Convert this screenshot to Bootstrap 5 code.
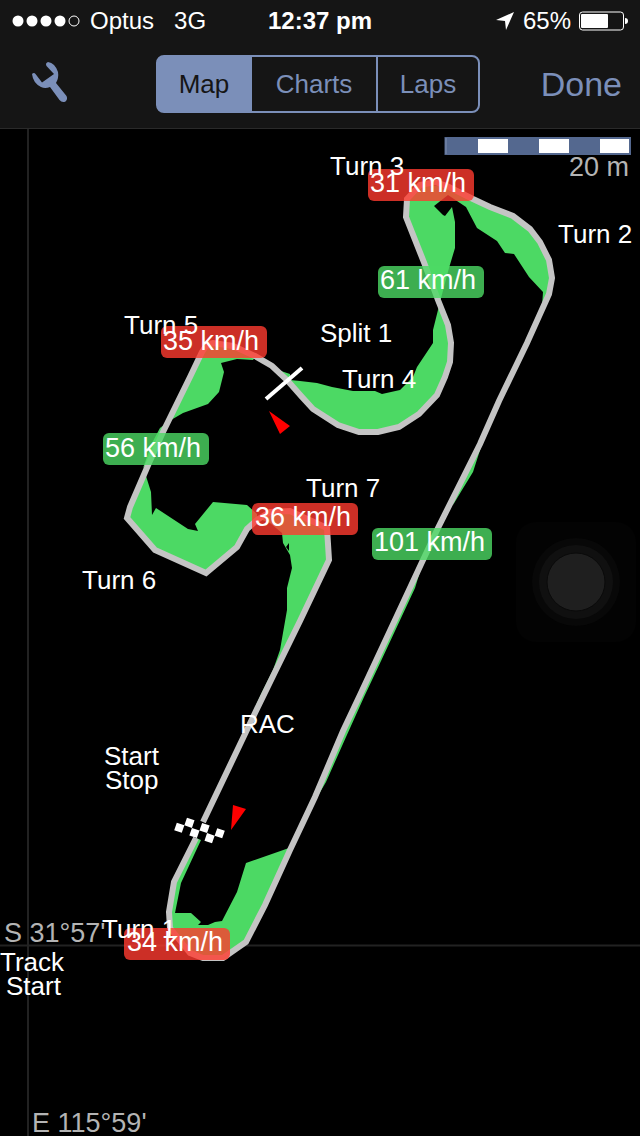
<!DOCTYPE html>
<html lang="en">
<head>
<meta charset="utf-8">
<meta name="viewport" content="width=device-width, initial-scale=1">
<title>Track map</title>
<link href="https://cdn.jsdelivr.net/npm/bootstrap@5.3.0/dist/css/bootstrap.min.css" rel="stylesheet">
<style>
  :root { --tint: #7b8fb9; --panel: #151515; }
  body { background: #000; color: #fff; font-family: "Liberation Sans", Arial, sans-serif; }
  .top-panel { background: var(--panel); border-bottom: 1px solid #2a2a2a; }
  .status-line { height: 42px; padding: 0 12px; font-size: 24px; line-height: 42px; }
  .side { flex: 1 1 0; }
  .tool-line { height: 86px; padding: 0 18px 2px 14px; }
  .segments .btn {
    --bs-btn-color: var(--tint); --bs-btn-border-color: var(--tint); --bs-btn-border-width: 2px;
    --bs-btn-hover-color: var(--tint); --bs-btn-hover-border-color: var(--tint);
    --bs-btn-active-color: var(--panel); --bs-btn-active-bg: var(--tint); --bs-btn-active-border-color: var(--tint);
    --bs-btn-border-radius: 8px; --bs-btn-padding-x: 0; --bs-btn-padding-y: 0;
    height: 58px; font-size: 26px; line-height: 54px;
  }
  .segments.btn-group > .btn:not(:first-child) { margin-left: -2px; }
  .seg-map { width: 96px; } .seg-charts { width: 128px; } .seg-laps { width: 104px; }
  .done-btn { color: var(--tint); font-size: 34px; line-height: 40px; }
  .track-map text { font-size: 26px; fill: #fff; }
  .track-map .axis { fill: #b4b4b4; font-size: 27px; }
  .track-map .speeds text { font-size: 27px; }
  .lap-area { fill: #4cd964; }
  .lap-line { fill: none; stroke: #c4c4c4; stroke-width: 6; stroke-linejoin: miter; }
  .fast { fill: #4cd964; fill-opacity: .8; }
  .slow { fill: #ff3b30; fill-opacity: .8; }
  .assist { right: 4px; top: 393px; width: 120px; height: 120px; border-radius: 20px; background: #030303; }
</style>
</head>
<body>
<header class="top-panel">
  <div class="status-line d-flex align-items-center">
    <div class="side d-flex align-items-center">
      <svg width="70" height="14" viewBox="0 0 70 14" fill="#fff" aria-label="Signal strength">
        <circle cx="6" cy="7" r="5.5"/><circle cx="20" cy="7" r="5.5"/><circle cx="34" cy="7" r="5.5"/><circle cx="48" cy="7" r="5.5"/>
        <circle cx="62" cy="7" r="5" fill="none" stroke="#fff"/>
      </svg>
      <span class="ms-1 ps-1 me-3">Optus</span><span class="ms-1">3G</span>
    </div>
    <span class="fw-bold">12:37 pm</span>
    <div class="side d-flex align-items-center justify-content-end gap-2">
      <svg width="20" height="20" viewBox="0 0 20 20" fill="#fff" aria-label="Location in use"><path d="M19 1 1 9l9 1 1 9z"/></svg>
      <span>65%</span>
      <svg width="49" height="20" viewBox="0 0 49 20" aria-label="Battery">
        <rect x=".5" y="1" width="44" height="18" rx="3" fill="none" stroke="#fff"/>
        <rect x="2" y="3" width="27" height="14" rx="1" fill="#fff"/><path d="M46 7q3 0 3 3t-3 3z" fill="#fff"/>
      </svg>
    </div>
  </div>
  <nav class="tool-line d-flex align-items-center">
    <div class="side">
      <button type="button" class="btn border-0 p-0 ms-3" aria-label="Settings">
        <svg class="d-block" width="40" height="44" viewBox="0 0 40 44" fill="#7b8fb9">
          <path d="M18 0Q25 1 28 10Q29 16 26 21L36.500 34Q38 37 35.500 39.500Q32 41 29.500 38L20 25Q15 27 11 25Q3 21 2 12Q4 10 5.500 12L12 20.500L24 12L16.500 4Q15 1 18 0Z"/>
        </svg>
      </button>
    </div>
    <div class="btn-group segments" role="group" aria-label="View">
      <button type="button" class="btn active seg-map" aria-pressed="true">Map</button>
      <button type="button" class="btn seg-charts">Charts</button>
      <button type="button" class="btn seg-laps">Laps</button>
    </div>
    <div class="side text-end"><button type="button" class="btn border-0 p-0 done-btn">Done</button></div>
  </nav>
</header>
<main class="position-relative">
  <!-- Map canvas; y starts at 129, below the toolbar -->
  <svg class="track-map d-block w-100" viewBox="0 129 640 1007" role="img" aria-label="Lap speed map">
    <path d="M28 129V1136M0 945.500H640" stroke="#222" stroke-width="2"/>
    <g class="lap-area">
      <path d="M406 217 425 265 440 302 449 268 455 248 455 222 452 207 445 216 443 215 434 206 448 195 466 207 477 228 497 241 505 253 514 254 529 277 543 292 542 307 549 295 553 278 549 260 540 242 530 229 513 216 490 207 473 199 447 186 420 185 407 199Z"/>
      <path d="M439 306 433 330 433 343 423 358 417 367 413 377 400 390 382 394 375 391 353 391 332 387 317 383 300 381 290 380 290 374 281 371 287 380 300 396 313 410 338 425 359 432 378 432 399 427 419 414 437 395 445 377 450 362 451 343 448 325Z"/>
      <path d="M255 357 253 360 237 359 221 363 224 372 219 392 208 404 183 413 171 420 190 377 202 352 213 343 233 346Z"/>
      <path d="M164 425 160 428 152 443 143 468 152 458 166 428Z"/>
      <path d="M146 476 151 492 152 515 156 508 188 529 198 531 195 524 213 502 247 505 257 514 257 520 247 529 237 547 206 574 155 550 126 518 130 507Z"/>
      <path fill-rule="evenodd" d="M257 518 270 523 282 533 283 543 290 555 292 568 287 588 287 610 280 650 273 670 262 692 252 714 257 712 276 672 283 660 329 560 327 528 290 511 270 512ZM286 547 289 543 289 551Z"/>
      <path d="M201 840 181 883 175 913 191 913 201 922 198 925 208 925 215 922 222 921 237 892 246 863 289 848 265 907 247 942 223 959 205 959 190 953 169 928 168 912 174 882 196 838Z"/>
      <path d="M482 444 473 472 462 490 453 505 456 490ZM423 562 415 588 381 661 364 697 346 737 326 782 312 806 343 730 373 667Z"/>
    </g>
    <path class="lap-line" d="M203 822 255 713 275 672 300 621 329 560 327 528 290 511 270 512 257 520 247 529 237 547 206 573 155 550 127 518 130 507 149 463 163 432 190 377 202 352Q207 343 213 343L233 346 255 356 272 366 287 380 302 397 313 409 338 425 359 432 378 432 399 427 419 414 437 395 445 377 450 362 451 343 448 325 438 300 425 265 406 217 407 199 420 185 435 182 447 186 473 199 490 207 513 216 530 229 540 242 549 260 552 278 549 294 527 343 499 401 480 444 438 528 423 560 395 620 360 695 343 731 315 797 290 850 265 905 246 942 223 958 203 958 190 953 170 928 169 912 174 882 196 838"/>
    <path d="M266 399 302 368" stroke="#fff" stroke-width="4"/>
    <path d="M269 411 290 426 280 434ZM233 805 246 809 231 830Z" fill="red"/>
    <g fill="#fff" transform="translate(199.500 830.500) rotate(19)">
      <path d="M-24 0h8v8h-8zM-16-8h8v8h-8zM-8 0h8v8h-8zM0-8h8v8h-8zM8 0h8v8h-8zM16-8h8v8h-8z"/>
    </g>

    <g>
      <rect x="444.500" y="137" width="186.500" height="18" fill="#54688f"/>
      <path d="M478 139h30v14h-30zM539 139h30v14h-30zM600 139h29v14h-29z" fill="#fff"/>
      <path d="M446 138v16" stroke="#8090b0"/>
    </g>
    <text class="axis" x="629" y="176" text-anchor="end">20 m</text>
    <text class="axis" x="4" y="942">S 31°57'</text>
    <text class="axis" x="32" y="1132">E 115°59'</text>

    <g class="slow">
      <rect x="368" y="169" width="106" height="32" rx="6"/>
      <rect x="161" y="326" width="106" height="32" rx="6"/>
      <rect x="252" y="503" width="106" height="32" rx="6"/>
      <rect x="124" y="928" width="106" height="32" rx="6"/>
    </g>
    <g class="fast">
      <rect x="378" y="266" width="106" height="32" rx="6"/>
      <rect x="103" y="433" width="106" height="32" rx="6"/>
      <rect x="372" y="528" width="120" height="32" rx="6"/>
    </g>
    <g class="speeds">
      <text x="370" y="192">31 km/h</text>
      <text x="163" y="350">35 km/h</text>
      <text x="255" y="526">36 km/h</text>
      <text x="127" y="951">34 km/h</text>
      <text x="380" y="289">61 km/h</text>
      <text x="105" y="457">56 km/h</text>
      <text x="374" y="551">101 km/h</text>
    </g>

    <text x="330" y="175">Turn 3</text>
    <text x="558" y="243">Turn 2</text>
    <text x="320" y="342">Split 1</text>
    <text x="342" y="388">Turn 4</text>
    <text x="124" y="334">Turn 5</text>
    <text x="306" y="497">Turn 7</text>
    <text x="82" y="589">Turn 6</text>
    <text x="240" y="733">RAC</text>
    <text x="104" y="765">Start</text>
    <text x="105" y="789">Stop</text>
    <text x="102" y="938">Turn 1</text>
    <text x="0" y="971">Track</text>
    <text x="6" y="995">Start</text>
  </svg>
  <button type="button" class="btn border-0 p-0 position-absolute assist" aria-label="AssistiveTouch">
    <svg class="d-block mx-auto" width="90" height="90" viewBox="0 0 90 90">
      <circle cx="45" cy="45" r="44" fill="#080808"/><circle cx="45" cy="45" r="37" fill="#101010"/>
      <circle cx="45" cy="45" r="29" fill="#1f1f1f" stroke="#0a0a0a"/>
    </svg>
  </button>
</main>
<script src="https://cdn.jsdelivr.net/npm/bootstrap@5.3.0/dist/js/bootstrap.bundle.min.js"></script>
</body>
</html>
